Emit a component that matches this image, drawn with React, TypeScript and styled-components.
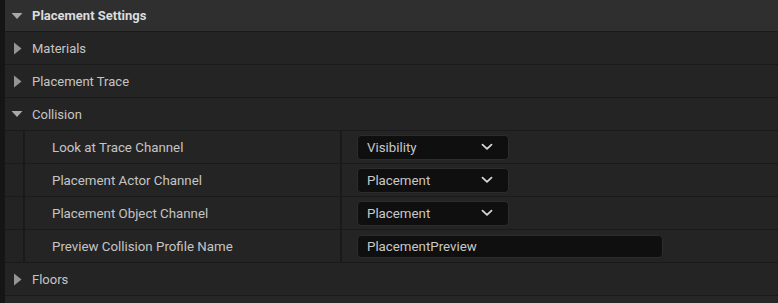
import React from "react";
import styled, { createGlobalStyle } from "styled-components";

const Global = createGlobalStyle`
  html, body { margin: 0; padding: 0; background: #242424; }
  body { font-family: Roboto, "Noto Sans", sans-serif; }
`;

const Panel = styled.div`
  width: 778px;
  height: 303px;
  overflow: hidden;
  box-sizing: border-box;
  border-left: 5px solid #151515;
  display: flex;
  flex-direction: column;
  background: #242424;
`;

const CategoryRow = styled.div<{ $top?: boolean }>`
  height: ${(p) => (p.$top ? 31 : 32)}px;
  flex: none;
  display: flex;
  align-items: center;
  background: ${(p) => (p.$top ? "#2f2f2f" : "#242424")};
  border-bottom: 1px solid #1a1a1a;
  color: ${(p) => (p.$top ? "#dcdcdc" : "#c4c4c4")};
  font-size: 13px;
  font-weight: ${(p) => (p.$top ? 700 : 400)};
`;

const ArrowBox = styled.div<{ $open: boolean }>`
  width: 27px;
  flex: none;
  display: flex;
  align-items: center;
  padding-left: ${(p) => (p.$open ? 6 : 8)}px;
  box-sizing: border-box;
`;

const PropRow = styled.div`
  height: 32px;
  flex: none;
  display: grid;
  grid-template-columns: 18px 2px 315px 2px 1fr;
  border-bottom: 1px solid #1a1a1a;
  background: #242424;
`;

const Indent = styled.div`
  background: #232323;
`;

const VLine = styled.div`
  background: #1a1a1a;
`;

const NameCell = styled.div`
  display: flex;
  align-items: center;
  padding-left: 27px;
  color: #c4c4c4;
  font-size: 13.3px;
`;

const ValueCell = styled.div`
  display: flex;
  align-items: center;
  padding-left: 15px;
`;

const Combo = styled.div`
  width: 152px;
  height: 25px;
  box-sizing: border-box;
  background: #0f0f0f;
  border: 1px solid #2c2c2c;
  border-radius: 4px;
  display: flex;
  align-items: center;
  justify-content: space-between;
  padding: 0 15px 0 9px;
  color: #c8c8c8;
  font-size: 13.3px;
`;

const TextBox = styled.div`
  width: 306px;
  height: 23px;
  box-sizing: border-box;
  background: #0f0f0f;
  border: 1px solid #2c2c2c;
  border-radius: 4px;
  display: flex;
  align-items: center;
  padding-left: 9px;
  color: #c8c8c8;
  font-size: 13.3px;
`;

const Filler = styled.div`
  flex: 1;
  background: #262626;
`;

const Tri = ({ open }: { open: boolean }) =>
  open ? (
    <svg width="12" height="8" viewBox="0 0 12 8">
      <path d="M0.5 1 L11.5 1 L6 7 Z" fill="#a8a8a8" />
    </svg>
  ) : (
    <svg width="9" height="13" viewBox="0 0 9 13">
      <path d="M1 0.5 L8.5 6.5 L1 12.5 Z" fill="#959595" />
    </svg>
  );

const Chevron = () => (
  <svg width="12" height="8" viewBox="0 0 12 8">
    <path d="M1.5 1.7 L6 5.8 L10.5 1.7" fill="none" stroke="#d6d6d6" strokeWidth="1.8" strokeLinecap="round" strokeLinejoin="round" />
  </svg>
);

const Category = ({ label, open, top }: { label: string; open: boolean; top?: boolean }) => (
  <CategoryRow $top={top}>
    <ArrowBox $open={open}>
      <Tri open={open} />
    </ArrowBox>
    {label}
  </CategoryRow>
);

const Prop = ({ label, children }: { label: string; children: React.ReactNode }) => (
  <PropRow>
    <Indent />
    <VLine />
    <NameCell>{label}</NameCell>
    <VLine />
    <ValueCell>{children}</ValueCell>
  </PropRow>
);

const Dropdown = ({ value }: { value: string }) => (
  <Combo>
    <span>{value}</span>
    <Chevron />
  </Combo>
);

export default function App() {
  return (
    <>
      <Global />
      <Panel>
        <Category label="Placement Settings" open top />
        <Category label="Materials" open={false} />
        <Category label="Placement Trace" open={false} />
        <Category label="Collision" open />
        <Prop label="Look at Trace Channel">
          <Dropdown value="Visibility" />
        </Prop>
        <Prop label="Placement Actor Channel">
          <Dropdown value="Placement" />
        </Prop>
        <Prop label="Placement Object Channel">
          <Dropdown value="Placement" />
        </Prop>
        <Prop label="Preview Collision Profile Name">
          <TextBox>PlacementPreview</TextBox>
        </Prop>
        <Category label="Floors" open={false} />
        <Filler />
      </Panel>
    </>
  );
}
